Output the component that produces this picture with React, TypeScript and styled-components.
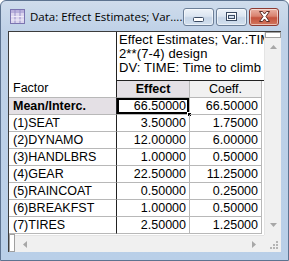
import React from "react";
import styled, { createGlobalStyle } from "styled-components";

const Global = createGlobalStyle`
  html, body { margin: 0; padding: 0; background: #ffffff; }
  #root { width: 289px; height: 261px; }
`;

const Window = styled.div`
  box-sizing: border-box;
  width: 289px;
  height: 261px;
  border: 1px solid #5d7390;
  border-radius: 6px 6px 0 0;
  background: linear-gradient(#cfdcec 0px, #bfd1e7 30px, #b9cfe8 100%);
  display: flex;
  flex-direction: column;
  overflow: hidden;
`;

const TitleBar = styled.div`
  height: 30px;
  display: flex;
  align-items: center;
  padding: 0 9px 0 9px;
`;

const AppIcon = styled.svg`
  width: 15px;
  height: 15px;
  flex: none;
  margin-right: 5px;
  margin-top: 1px;
`;

const Title = styled.div`
  flex: 1;
  font-family: "Open Sans", "Noto Sans", sans-serif;
  font-size: 11.5px;
  color: #000;
  white-space: nowrap;
  overflow: hidden;
  margin-top: 1px;
`;

const Buttons = styled.div`
  display: flex;
  gap: 2px;
  margin-top: 1px;
`;

const CapButton = styled.div<{ $close?: boolean }>`
  box-sizing: border-box;
  width: ${(p) => (p.$close ? 30 : 31)}px;
  height: 18px;
  border-radius: 3px;
  border: 1px solid ${(p) => (p.$close ? "#8d3a32" : "#6c7f98")};
  background: ${(p) =>
    p.$close
      ? "linear-gradient(#eab2a4 0%, #d9826f 45%, #c4523c 55%, #d2765e 100%)"
      : "linear-gradient(#eef3f9 0%, #dbe5f1 45%, #c6d5e7 55%, #d3e0ef 100%)"};
  box-shadow: inset 0 0 0 1px rgba(255, 255, 255, 0.55);
  display: flex;
  align-items: center;
  justify-content: center;
`;

const Body = styled.div`
  flex: 1;
  display: flex;
  padding: 0 7px 8px 7px;
`;

const Client = styled.div`
  flex: 1;
  display: grid;
  grid-template-columns: 1fr 17px;
  grid-template-rows: 1fr 17px;
  border-left: 1px solid #3c3c3c;
  border-top: 1px solid #3c3c3c;
  background: #ffffff;
  font-family: "Liberation Sans", Arial, sans-serif;
  font-size: 12.5px;
  color: #000;
`;

const Sheet = styled.div`
  display: grid;
  grid-template-columns: 108px 73px 72px 1fr;
  grid-template-rows: 49px 17px repeat(8, 17px) 1fr;
  overflow: hidden;
  background: #fff;
`;

const CornerHead = styled.div`
  grid-row: 1 / span 2;
  grid-column: 1;
  border-right: 1px solid #222;
  border-bottom: 1px solid #b8b8b8;
  display: flex;
  align-items: flex-end;
  padding: 0 0 1px 4px;
  line-height: 15px;
`;

const Caption = styled.div`
  grid-row: 1;
  grid-column: 2 / span 3;
  border-bottom: 1px solid #222;
  padding: 1px 0 0 2px;
  line-height: 14px;
  font-size: 13px;
  letter-spacing: 0.12px;
  white-space: nowrap;
  overflow: hidden;
  width: 146px;
`;

const ColHead = styled.div<{ $active?: boolean }>`
  grid-row: 2;
  border-right: 1px solid #b8b8b8;
  border-bottom: 1px solid #b8b8b8;
  background: ${(p) => (p.$active ? "#e4e0e5" : "#f1f1f1")};
  font-weight: ${(p) => (p.$active ? 700 : 400)};
  text-align: center;
  line-height: 16px;
`;

const RowHead = styled.div<{ $active?: boolean }>`
  grid-column: 1;
  border-right: 1px solid #222;
  border-bottom: 1px solid #b8b8b8;
  background: ${(p) => (p.$active ? "#e4e0e5" : "#ffffff")};
  font-weight: ${(p) => (p.$active ? 700 : 400)};
  padding-left: 4px;
  line-height: 16px;
  white-space: nowrap;
`;

const Cell = styled.div<{ $selected?: boolean }>`
  position: relative;
  border-right: 1px solid #b8b8b8;
  border-bottom: 1px solid #b8b8b8;
  text-align: right;
  padding-right: 3px;
  line-height: 16px;
  ${(p) => (p.$selected ? "box-shadow: inset 0 0 0 2px #000;" : "")}
`;

const Handle = styled.span`
  position: absolute;
  right: -3px;
  bottom: -3px;
  width: 5px;
  height: 5px;
  background: #000;
  border: 1px solid #fff;
  box-sizing: border-box;
`;

const VScroll = styled.div`
  display: flex;
  flex-direction: column;
  background: #f0f0f0;
  border-left: 1px solid #e4e4e4;
`;

const SplitV = styled.div`
  height: 6px;
  box-sizing: border-box;
  border: 1px solid #a0a0a0;
  background: #fff;
`;

const Track = styled.div<{ $dir: "v" | "h" }>`
  flex: 1;
  display: flex;
  flex-direction: ${(p) => (p.$dir === "v" ? "column" : "row")};
  align-items: center;
  justify-content: space-between;
  padding: ${(p) => (p.$dir === "v" ? "7px 0 8px" : "0 8px 0 8px")};
`;

const HScroll = styled.div`
  display: flex;
  background: #f0f0f0;
  border-top: 1px solid #e4e4e4;
`;

const SplitH = styled.div`
  width: 6px;
  box-sizing: border-box;
  border: 1px solid #a0a0a0;
  background: #fff;
  margin-top: -2px;
`;

const Corner = styled.div`
  background: #f0f0f0;
  display: flex;
  align-items: flex-end;
  justify-content: flex-end;
  padding: 0 3px 3px 0;
`;

const Arrow = ({ dir }: { dir: "up" | "down" | "left" | "right" }) => {
  const pts =
    dir === "up"
      ? "0,4 7,4 3.5,0"
      : dir === "down"
      ? "0,0 7,0 3.5,4"
      : dir === "left"
      ? "4,0 4,7 0,3.5"
      : "0,0 0,7 4,3.5";
  const w = dir === "up" || dir === "down" ? 7 : 4;
  const h = dir === "up" || dir === "down" ? 4 : 7;
  return (
    <svg width={w} height={h} viewBox={`0 0 ${w} ${h}`}>
      <polygon points={pts} fill="#a7a7a7" />
    </svg>
  );
};

const Grip = () => (
  <svg width="8" height="8" viewBox="0 0 8 8">
    {[
      [6, 0],
      [6, 3],
      [3, 3],
      [6, 6],
      [3, 6],
      [0, 6],
    ].map(([x, y], i) => (
      <rect key={i} x={x} y={y} width="2" height="2" fill="#b5b5b5" />
    ))}
  </svg>
);

const rows: [string, string, string][] = [
  ["Mean/Interc.", "66.50000", "66.50000"],
  ["(1)SEAT", "3.50000", "1.75000"],
  ["(2)DYNAMO", "12.00000", "6.00000"],
  ["(3)HANDLBRS", "1.00000", "0.50000"],
  ["(4)GEAR", "22.50000", "11.25000"],
  ["(5)RAINCOAT", "0.50000", "0.25000"],
  ["(6)BREAKFST", "1.00000", "0.50000"],
  ["(7)TIRES", "2.50000", "1.25000"],
];

const Spacer = styled.div``;

export default function App() {
  return (
    <>
      <Global />
      <Window>
        <TitleBar>
          <AppIcon viewBox="0 0 15 15">
            <rect x="0.5" y="0.5" width="14" height="14" fill="#dcd6ee" stroke="#7b74b0" />
            <rect x="1" y="1" width="13" height="3" fill="#b9b0dc" />
            <line x1="5" y1="1" x2="5" y2="14" stroke="#9890c8" />
            <line x1="10" y1="1" x2="10" y2="14" stroke="#9890c8" />
            <line x1="1" y1="7.5" x2="14" y2="7.5" stroke="#eeeaf8" />
            <line x1="1" y1="11" x2="14" y2="11" stroke="#eeeaf8" />
          </AppIcon>
          <Title>Data: Effect Estimates; Var....</Title>
          <Buttons>
            <CapButton>
              <svg width="11" height="5" viewBox="0 0 11 5" style={{ marginTop: 5 }}>
                <rect x="0.5" y="0.5" width="10" height="4" rx="1" fill="#fff" stroke="#3b4b63" />
              </svg>
            </CapButton>
            <CapButton>
              <svg width="11" height="9" viewBox="0 0 11 9">
                <rect x="0.5" y="0.5" width="10" height="8" fill="none" stroke="#3b4b63" />
                <rect x="1.5" y="1.5" width="8" height="6" fill="none" stroke="#fff" />
                <rect x="2.5" y="3.5" width="6" height="3" fill="none" stroke="#3b4b63" />
              </svg>
            </CapButton>
            <CapButton $close>
              <svg width="13" height="11" viewBox="0 0 13 11">
                <path
                  d="M1.5 0.5 H4.5 L6.5 3 L8.5 0.5 H11.5 L8 5.5 L11.5 10.5 H8.5 L6.5 8 L4.5 10.5 H1.5 L5 5.5 Z"
                  fill="#fff"
                  stroke="#5a2a24"
                  strokeWidth="1"
                  strokeLinejoin="round"
                />
              </svg>
            </CapButton>
          </Buttons>
        </TitleBar>
        <Body>
          <Client>
            <Sheet>
              <CornerHead>Factor</CornerHead>
              <Caption>
                Effect Estimates; Var.:TIME
                <br />
                2**(7-4) design
                <br />
                DV: TIME: Time to climb
              </Caption>
              <ColHead $active>Effect</ColHead>
              <ColHead>Coeff.</ColHead>
              <Spacer />
              {rows.map(([f, e, c], i) => (
                <React.Fragment key={f}>
                  <RowHead $active={i === 0}>{f}</RowHead>
                  <Cell $selected={i === 0}>
                    {e}
                    {i === 0 && <Handle />}
                  </Cell>
                  <Cell>{c}</Cell>
                  <Spacer />
                </React.Fragment>
              ))}
            </Sheet>
            <VScroll>
              <SplitV />
              <Track $dir="v">
                <Arrow dir="up" />
                <Arrow dir="down" />
              </Track>
            </VScroll>
            <HScroll>
              <SplitH />
              <Track $dir="h">
                <Arrow dir="left" />
                <Arrow dir="right" />
              </Track>
            </HScroll>
            <Corner>
              <Grip />
            </Corner>
          </Client>
        </Body>
      </Window>
    </>
  );
}
